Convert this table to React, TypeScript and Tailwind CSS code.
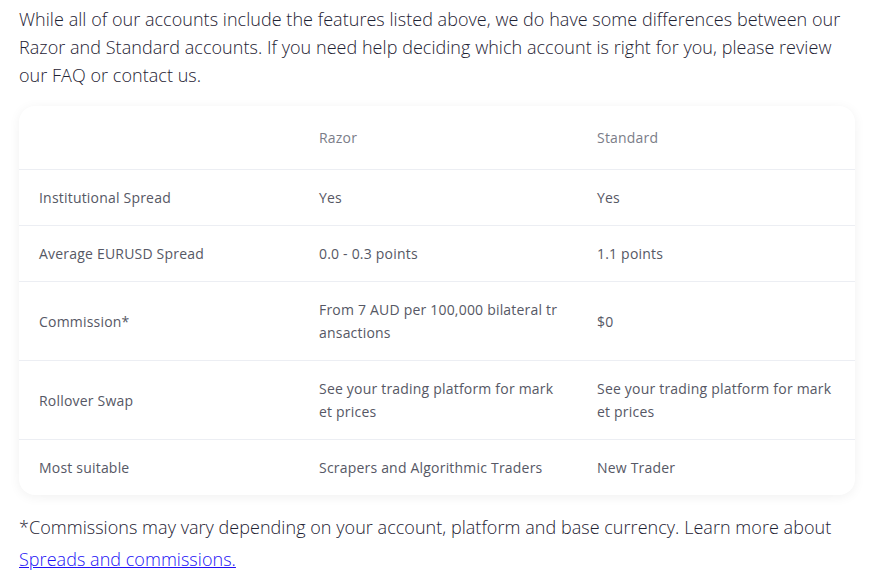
import React from "react";

const rows: { label: string; razor: string; standard: string }[] = [
  { label: "Institutional Spread", razor: "Yes", standard: "Yes" },
  { label: "Average EURUSD Spread", razor: "0.0 - 0.3 points", standard: "1.1 points" },
  { label: "Commission*", razor: "From 7 AUD per 100,000 bilateral transactions", standard: "$0" },
  { label: "Rollover Swap", razor: "See your trading platform for market prices", standard: "See your trading platform for market prices" },
  { label: "Most suitable", razor: "Scrapers and Algorithmic Traders", standard: "New Trader" },
];

export default function App() {
  return (
    <div className="w-[882px] h-[588px] bg-white px-[19px] pt-[5px] overflow-hidden" style={{ fontFamily: '"Open Sans", "Noto Sans", sans-serif' }}>
      <p className="w-[830px] text-[18px] leading-[28px] font-light tracking-[0.04px] text-[#1e2233]">
        While all of our accounts include the features listed above, we do have some differences between our Razor and Standard accounts. If you need help deciding which account is right for you, please review our FAQ or contact us.
      </p>
      <div className="mt-[17px] w-[836px] rounded-[16px] bg-white shadow-[0_2px_12px_rgba(0,0,0,0.06)] text-[14px] leading-[23px] tracking-[0.2px] text-[#565865]">
        <div className="grid grid-cols-[280px_278px_278px] border-b border-[#eceef3]">
          <div className="pl-5 pr-[18px] py-5"></div>
          <div className="pl-5 pr-[18px] py-5 text-[#7b7d88]">Razor</div>
          <div className="pl-5 pr-[18px] py-5 text-[#7b7d88]">Standard</div>
        </div>
        {rows.map((r, i) => (
          <div key={i} className={"grid grid-cols-[280px_278px_278px] items-center " + (i < rows.length - 1 ? "border-b border-[#eceef3]" : "")}>
            <div className="pl-5 pr-[18px] py-4">{r.label}</div>
            <div className="pl-5 pr-[18px] py-4 break-all">{r.razor}</div>
            <div className="pl-5 pr-[18px] py-4 break-all">{r.standard}</div>
          </div>
        ))}
      </div>
      <p className="mt-[16px] text-[18px] leading-[32px] font-light tracking-[0.04px] text-[#1e2233]">
        *Commissions may vary depending on your account, platform and base currency. Learn more about{" "}
        <a href="#" className="text-[#2211f5] underline">Spreads and commissions.</a>
      </p>
    </div>
  );
}
